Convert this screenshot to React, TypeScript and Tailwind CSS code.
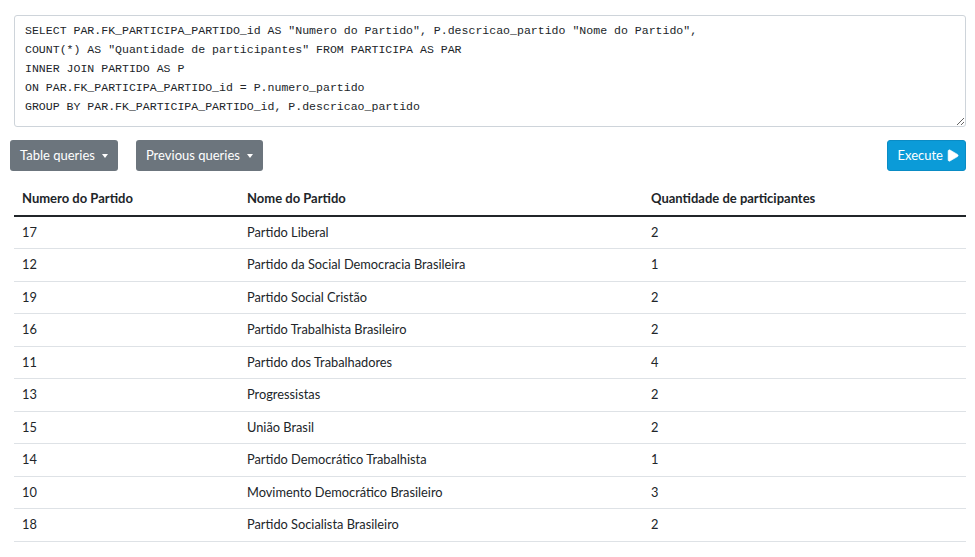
import { Play } from 'lucide-react';

const query = `SELECT PAR.FK_PARTICIPA_PARTIDO_id AS "Numero do Partido", P.descricao_partido "Nome do Partido",
COUNT(*) AS "Quantidade de participantes" FROM PARTICIPA AS PAR
INNER JOIN PARTIDO AS P
ON PAR.FK_PARTICIPA_PARTIDO_id = P.numero_partido
GROUP BY PAR.FK_PARTICIPA_PARTIDO_id, P.descricao_partido`;

const rows = [
  ['17', 'Partido Liberal', '2'],
  ['12', 'Partido da Social Democracia Brasileira', '1'],
  ['19', 'Partido Social Cristão', '2'],
  ['16', 'Partido Trabalhista Brasileiro', '2'],
  ['11', 'Partido dos Trabalhadores', '4'],
  ['13', 'Progressistas', '2'],
  ['15', 'União Brasil', '2'],
  ['14', 'Partido Democrático Trabalhista', '1'],
  ['10', 'Movimento Democrático Brasileiro', '3'],
  ['18', 'Partido Socialista Brasileiro', '2'],
];

function Caret() {
  return <span className="ml-[7px] inline-block h-0 w-0 border-x-[3.5px] border-t-[4px] border-x-transparent border-t-white align-middle" />;
}

export default function App() {
  return (
    <div className="min-h-[557px] bg-white font-['Lato',sans-serif] text-[13px] text-[#212529]">
      {/* Query editor */}
      <div className="pl-[14px] pr-[9px] pt-[15px]">
        <textarea
          readOnly
          value={query}
          spellCheck={false}
          className="block h-[112px] w-full rounded-[3px] border border-[#ced4da] px-[10px] py-[5px] font-['Liberation_Mono',monospace] text-[11.55px] leading-[19px] text-[#212529] outline-none"
        />
      </div>

      {/* Toolbar */}
      <div className="flex items-center pl-[10px] pr-[9px] pt-[13px]">
        <button className="flex h-[31px] items-center rounded-[3px] bg-[#6c757d] px-[10px] text-[13px] text-white">
          Table queries
          <Caret />
        </button>
        <button className="ml-[18px] flex h-[31px] items-center rounded-[3px] bg-[#6c757d] px-[10px] text-[13px] text-white">
          Previous queries
          <Caret />
        </button>
        <button className="ml-auto flex h-[31px] items-center rounded-[3px] border border-[#0a8cc5] bg-[#0b9bd8] pl-[9px] pr-[5px] text-[13px] text-white">
          Execute
          <Play className="ml-[2px] h-[15px] w-[15px] fill-white" strokeWidth={1} />
        </button>
      </div>

      {/* Results */}
      <div className="pl-[14px] pr-[9px] pt-[11px]">
        <table className="w-full border-collapse text-left">
          <thead>
            <tr className="h-[34px] border-b-2 border-[#212529]">
              <th className="w-[225px] px-[8px] font-bold">Numero do Partido</th>
              <th className="w-[404px] px-[8px] font-bold">Nome do Partido</th>
              <th className="px-[8px] font-bold">Quantidade de participantes</th>
            </tr>
          </thead>
          <tbody className="text-[12.8px]">
            {rows.map((r) => (
              <tr key={r[0]} className="h-[32.5px] border-b border-[#dee2e6]">
                <td className="px-[8px]">{r[0]}</td>
                <td className="px-[8px]">{r[1]}</td>
                <td className="px-[8px]">{r[2]}</td>
              </tr>
            ))}
          </tbody>
        </table>
      </div>
    </div>
  );
}
